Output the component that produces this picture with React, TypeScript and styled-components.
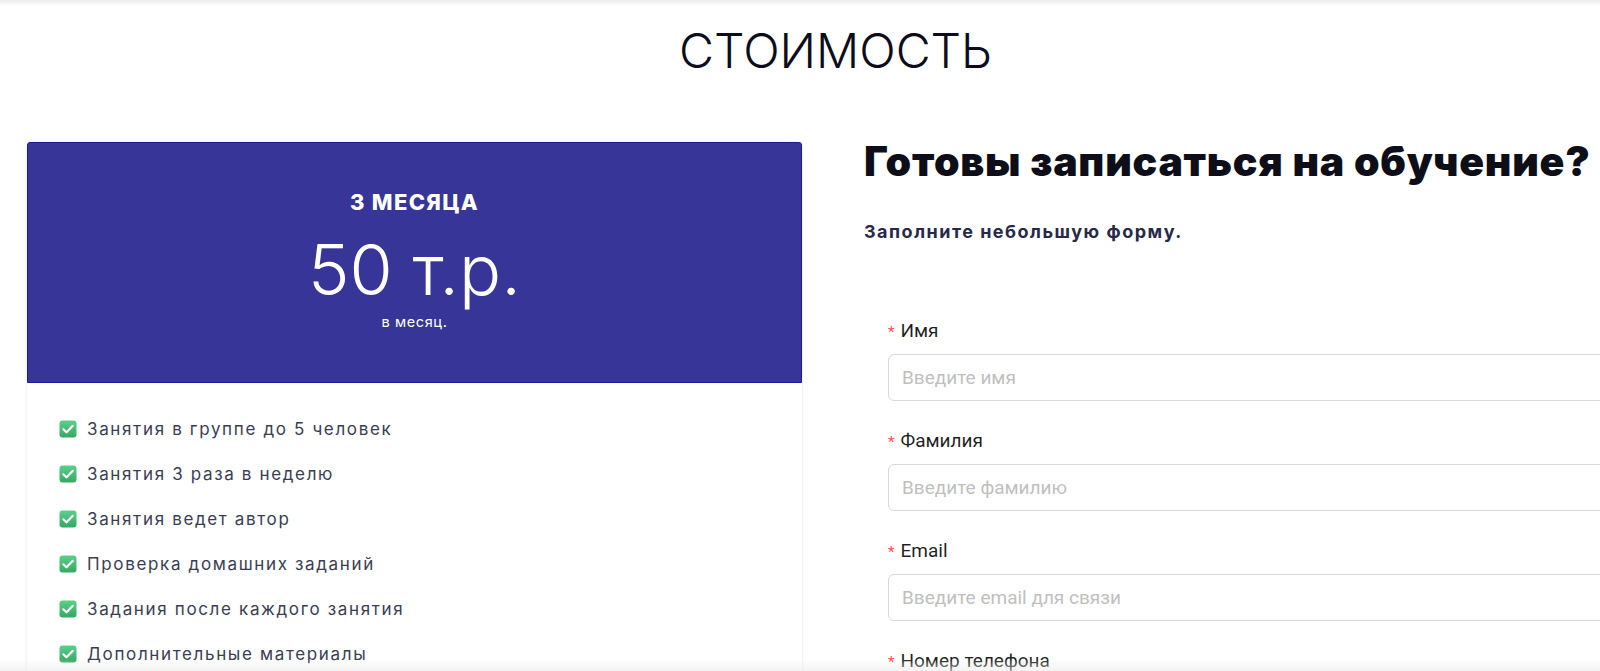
import React from "react";
import styled, { createGlobalStyle } from "styled-components";

const GlobalStyle = createGlobalStyle`
    html, body {
        margin: 0;
        padding: 0;
        background: #fff;
        overflow: hidden;
    }
    body {
        font-family: Inter, "Noto Sans", sans-serif;
    }
`;

const Page = styled.section`
    width: 1600px;
    height: 671px;
    overflow: hidden;
    position: relative;
`;

const TopShade = styled.div`
    position: fixed;
    left: 0;
    right: 0;
    top: 0;
    height: 6px;
    background: linear-gradient(#ececec, rgba(255, 255, 255, 0));
    pointer-events: none;
`;

const BottomShade = styled.div`
    position: fixed;
    left: 0;
    right: 0;
    bottom: 0;
    height: 12px;
    background: linear-gradient(rgba(255, 255, 255, 0), rgba(235, 235, 235, 0.6));
    pointer-events: none;
`;

const Title = styled.h2`
    margin: 0;
    padding: 22px 0 0 71px;
    text-align: center;
    font-family: Inter, sans-serif;
    font-weight: 300;
    font-size: 48px;
    line-height: 58px;
    color: #0c0c1c;
`;

const Columns = styled.div`
    display: flex;
    align-items: flex-start;
    margin-top: 62px;
    padding-left: 27px;
    gap: 62px;
`;

const Card = styled.div`
    width: 775px;
    min-height: 560px;
    flex-shrink: 0;
    border-radius: 3px;
    background: #fff;
    box-shadow: 0 0 3px rgba(0, 0, 0, 0.12);
`;

const CardHead = styled.div`
    height: 241px;
    box-sizing: border-box;
    background: #373597;
    border: 1px solid #1d1a9b;
    border-radius: 3px 3px 0 0;
    color: #fff;
    display: flex;
    flex-direction: column;
    align-items: center;
    padding-top: 46px;
`;

const Period = styled.div`
    font-weight: 800;
    font-size: 22px;
    line-height: 26px;
    letter-spacing: 1.3px;
`;

const Price = styled.div`
    font-weight: 300;
    font-size: 70px;
    line-height: 80px;
    margin-top: 15px;
`;

const PerMonth = styled.div`
    font-size: 14.5px;
    line-height: 18px;
    margin-top: 3px;
    letter-spacing: 0.6px;
`;

const Features = styled.ul`
    list-style: none;
    margin: 0;
    padding: 34px 0 0 32px;
    display: flex;
    flex-direction: column;
    gap: 21px;
`;

const Feature = styled.li`
    display: flex;
    align-items: center;
    gap: 10px;
    font-size: 17px;
    line-height: 24px;
    letter-spacing: 1.65px;
    color: #3b3d52;
`;

const FormCol = styled.div`
    flex: 1;
    min-width: 0;
    margin-top: -5px;
`;

const FormTitle = styled.h1`
    margin: 0;
    font-weight: 900;
    font-size: 41px;
    line-height: 48px;
    color: #0e0e18;
    letter-spacing: 0.75px;
    white-space: nowrap;
`;

const FormLead = styled.p`
    margin: 36px 0 0;
    font-weight: 700;
    font-size: 18px;
    line-height: 22px;
    letter-spacing: 1.5px;
    color: #28294a;
`;

const Fields = styled.div`
    margin: 76px 0 0 24px;
    display: flex;
    flex-direction: column;
    gap: 28px;
`;

const Field = styled.div`
    display: flex;
    flex-direction: column;
`;

const Label = styled.label`
    font-family: Roboto, "Liberation Sans", sans-serif;
    font-size: 19px;
    line-height: 24px;
    color: rgba(0, 0, 0, 0.88);
    margin-bottom: 10px;

    &::before {
        content: "*";
        color: #ff4d4f;
        margin-right: 6px;
        font-size: 15px;
    }
`;

const Input = styled.input`
    box-sizing: border-box;
    width: 760px;
    height: 47px;
    padding: 0 13px;
    border: 1px solid #d9d9d9;
    border-radius: 6px;
    font-family: Roboto, "Liberation Sans", sans-serif;
    font-size: 19px;
    color: rgba(0, 0, 0, 0.88);
    background: #fff;
    outline: none;

    &::placeholder {
        color: #bfbfbf;
    }
`;

function Check() {
    return (
        <svg width="18" height="18" viewBox="0 0 18 18">
            <defs>
                <linearGradient id="chk" x1="0" y1="0" x2="0" y2="1">
                    <stop offset="0" stopColor="#5bd08a" />
                    <stop offset="1" stopColor="#35a862" />
                </linearGradient>
            </defs>
            <rect x="0.5" y="0.5" width="17" height="17" rx="3" fill="url(#chk)" />
            <path d="M4.3 9.3 L7.5 12.3 L13.8 5.8" fill="none" stroke="#fff" strokeWidth="2.2" strokeLinecap="round" strokeLinejoin="round" />
        </svg>
    );
}

const features = [
    "Занятия в группе до 5 человек",
    "Занятия 3 раза в неделю",
    "Занятия ведет автор",
    "Проверка домашних заданий",
    "Задания после каждого занятия",
    "Дополнительные материалы",
];

const fields = [
    { label: "Имя", placeholder: "Введите имя" },
    { label: "Фамилия", placeholder: "Введите фамилию" },
    { label: "Email", placeholder: "Введите email для связи" },
    { label: "Номер телефона", placeholder: "Введите номер телефона" },
];

function App() {
    return (
        <Page>
            <GlobalStyle />
            <Title>СТОИМОСТЬ</Title>
            <Columns>
                <Card>
                    <CardHead>
                        <Period>3 МЕСЯЦА</Period>
                        <Price>50 т.р.</Price>
                        <PerMonth>в месяц.</PerMonth>
                    </CardHead>
                    <Features>
                        {features.map((f) => (
                            <Feature key={f}>
                                <Check />
                                {f}
                            </Feature>
                        ))}
                    </Features>
                </Card>
                <FormCol>
                    <FormTitle>Готовы записаться на обучение?</FormTitle>
                    <FormLead>Заполните небольшую форму.</FormLead>
                    <Fields>
                        {fields.map((f) => (
                            <Field key={f.label}>
                                <Label>{f.label}</Label>
                                <Input placeholder={f.placeholder} />
                            </Field>
                        ))}
                    </Fields>
                </FormCol>
            </Columns>
            <TopShade />
            <BottomShade />
        </Page>
    );
}

export default App;
